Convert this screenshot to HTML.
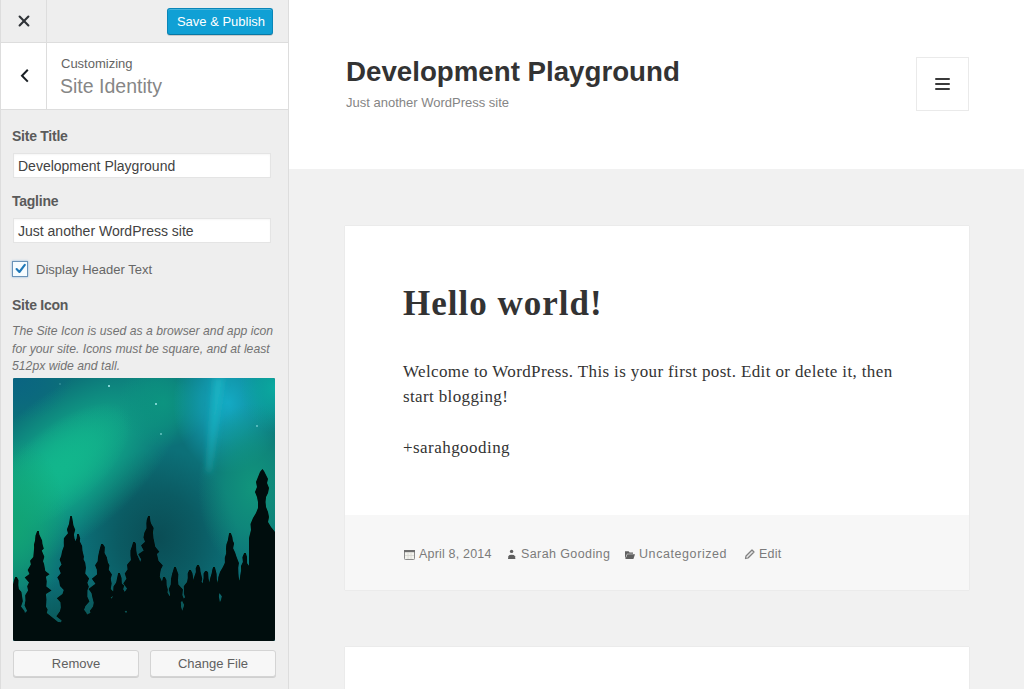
<!DOCTYPE html>
<html><head><meta charset="utf-8">
<style>
*{box-sizing:border-box;margin:0;padding:0}
html,body{width:1024px;height:689px;overflow:hidden;background:#f1f1f1;font-family:"Liberation Sans",sans-serif}
.abs{position:absolute}
#side{position:absolute;left:0;top:0;width:289px;height:689px;background:#eee;border-right:1px solid #ddd}
#lline{position:absolute;left:0;top:0;width:1px;height:689px;background:#ddd;z-index:5}
#topbar{position:absolute;left:0;top:0;width:288px;height:43px;border-bottom:1px solid #ddd;background:#eee}
#closecol{position:absolute;left:46px;top:0;width:1px;height:42px;background:#ddd}
#btn{position:absolute;left:167px;top:8px;width:106px;height:27px;background:#10a0d5;border:1px solid #0a86b8;border-bottom-color:#0878a5;border-radius:3px;color:#fff;font-size:13px;line-height:25px;padding-left:2px;text-align:center;box-shadow:inset 0 1px 0 rgba(120,200,230,.5),0 1px 0 rgba(0,0,0,.15)}
#sechead{position:absolute;left:0;top:43px;width:288px;height:67px;background:#fff;border-bottom:1px solid #ddd}
#backcol{position:absolute;left:46px;top:0;width:1px;height:66px;background:#ddd}
.lbl{position:absolute;left:12px;top:0;margin-top:1px;font-size:14px;letter-spacing:-0.25px;font-weight:bold;color:#5a5a5a}
.inp{position:absolute;left:13px;width:258px;height:25px;background:#fff;border:1px solid #e4e4e4;font-size:14px;color:#424242;padding-left:4px;line-height:25px;box-shadow:inset 0 1px 2px rgba(0,0,0,.04)}
#preview{position:absolute;left:289px;top:0;width:735px;height:689px;background:#f1f1f1}
#header{position:absolute;left:0;top:0;width:735px;height:169px;background:#fff}
.card{position:absolute;left:56px;width:624px;background:#fff;box-shadow:0 0 1px rgba(0,0,0,.15)}
.btn2{position:absolute;top:650px;height:27px;background:#f7f7f7;border:1px solid #d4d4d4;border-radius:3px;box-shadow:0 1px 0 #d0d0d0;color:#606060;font-size:13px;text-align:center;line-height:25px}
</style></head><body>
<div id="side"><div id="lline"></div>
  <div id="topbar">
    <div id="closecol"></div>
    <svg class="abs" style="left:18px;top:15px" width="12" height="12" viewBox="0 0 12 12"><path d="M1.6 1.6L10.4 10.4M10.4 1.6L1.6 10.4" stroke="#2f3337" stroke-width="2.1" stroke-linecap="round"/></svg>
    <div id="btn">Save &amp; Publish</div>
  </div>
  <div id="sechead">
    <div id="backcol"></div>
    <svg class="abs" style="left:20px;top:26px" width="10" height="14" viewBox="0 0 10 14"><path d="M7.8 0.8L2 6.7L7.8 12.6" stroke="#191e23" stroke-width="2" fill="none"/></svg>
    <div class="abs" style="left:61px;top:13px;font-size:13px;color:#646464">Customizing</div>
    <div class="abs" style="left:60px;top:32px;font-size:19.5px;color:#868686">Site Identity</div>
  </div>
  <div class="lbl" style="top:127px">Site Title</div>
  <div class="inp" style="top:153px">Development Playground</div>
  <div class="lbl" style="top:192px">Tagline</div>
  <div class="inp" style="top:218px">Just another WordPress site</div>
  <div class="abs" style="left:12px;top:261px;width:16px;height:16px;background:#f6fcff;border:1px solid #6a93b8;box-shadow:0 0 2px rgba(91,157,217,.7)"></div>
  <svg class="abs" style="left:13px;top:262px" width="14" height="14" viewBox="0 0 14 14"><path d="M3.6 7L6.4 10L11.8 2.8" stroke="#1f78b8" stroke-width="2.1" fill="none" stroke-linecap="round" stroke-linejoin="round"/></svg>
  <div class="abs" style="left:36px;top:262px;font-size:13px;color:#666">Display Header Text</div>
  <div class="lbl" style="top:296px">Site Icon</div>
  <div class="abs" style="left:12px;top:323px;width:290px;white-space:nowrap;font-size:12.2px;letter-spacing:0.02px;font-style:italic;color:#737373;line-height:17.5px">The Site Icon is used as a browser and app icon<br>for your site. Icons must be square, and at least<br>512px wide and tall.</div>
  <div id="img" class="abs" style="left:13px;top:378px;width:262px;height:263px;border-radius:2px;overflow:hidden;background:#0b5e6a">
<svg width="262" height="263" viewBox="0 0 262 263">
<defs><radialGradient id="gTL"><stop offset="0" stop-color="#0a6482" stop-opacity="1"/><stop offset="0.5" stop-color="#0a6482" stop-opacity="0.6"/><stop offset="1" stop-color="#0a6482" stop-opacity="0"/></radialGradient><radialGradient id="gG"><stop offset="0" stop-color="#12b68c" stop-opacity="1"/><stop offset="0.5" stop-color="#12b68c" stop-opacity="0.6"/><stop offset="1" stop-color="#12b68c" stop-opacity="0"/></radialGradient><radialGradient id="gG2"><stop offset="0" stop-color="#12a474" stop-opacity="1"/><stop offset="0.5" stop-color="#12a474" stop-opacity="0.6"/><stop offset="1" stop-color="#12a474" stop-opacity="0"/></radialGradient><radialGradient id="gD"><stop offset="0" stop-color="#0a4d55" stop-opacity="1"/><stop offset="0.5" stop-color="#0a4d55" stop-opacity="0.6"/><stop offset="1" stop-color="#0a4d55" stop-opacity="0"/></radialGradient><radialGradient id="gC"><stop offset="0" stop-color="#14aac4" stop-opacity="1"/><stop offset="0.5" stop-color="#14aac4" stop-opacity="0.6"/><stop offset="1" stop-color="#14aac4" stop-opacity="0"/></radialGradient><radialGradient id="gR"><stop offset="0" stop-color="#0aaaa0" stop-opacity="1"/><stop offset="0.5" stop-color="#0aaaa0" stop-opacity="0.6"/><stop offset="1" stop-color="#0aaaa0" stop-opacity="0"/></radialGradient><radialGradient id="gRM"><stop offset="0" stop-color="#11957c" stop-opacity="1"/><stop offset="0.5" stop-color="#11957c" stop-opacity="0.6"/><stop offset="1" stop-color="#11957c" stop-opacity="0"/></radialGradient><radialGradient id="gB"><stop offset="0" stop-color="#0a4a48" stop-opacity="1"/><stop offset="0.5" stop-color="#0a4a48" stop-opacity="0.6"/><stop offset="1" stop-color="#0a4a48" stop-opacity="0"/></radialGradient><radialGradient id="gT2"><stop offset="0" stop-color="#0c9480" stop-opacity="1"/><stop offset="0.5" stop-color="#0c9480" stop-opacity="0.6"/><stop offset="1" stop-color="#0c9480" stop-opacity="0"/></radialGradient>
<filter id="b3" filterUnits="userSpaceOnUse" x="-50" y="-50" width="362" height="363"><feGaussianBlur stdDeviation="3"/></filter>
<filter id="b4" filterUnits="userSpaceOnUse" x="-50" y="-50" width="362" height="363"><feGaussianBlur stdDeviation="0.5"/></filter>
</defs>
<rect width="262" height="263" fill="#0c7078"/>
<ellipse cx="0" cy="0" rx="60" ry="45" fill="url(#gTL)"/>
<ellipse cx="145" cy="160" rx="80" ry="90" fill="url(#gD)"/>
<ellipse cx="50" cy="90" rx="150" ry="70" fill="url(#gG)" transform="rotate(-40 50 90)"/>
<ellipse cx="45" cy="90" rx="90" ry="40" fill="url(#gG)" transform="rotate(-40 45 90)"/>
<ellipse cx="0" cy="150" rx="55" ry="90" fill="url(#gG2)"/>
<ellipse cx="150" cy="25" rx="45" ry="45" fill="url(#gT2)"/>
<ellipse cx="215" cy="25" rx="55" ry="70" fill="url(#gC)"/>
<ellipse cx="262" cy="10" rx="35" ry="45" fill="url(#gR)"/>
<ellipse cx="240" cy="110" rx="55" ry="85" fill="url(#gRM)"/>
<ellipse cx="131" cy="263" rx="200" ry="70" fill="url(#gB)"/>
<g filter="url(#b3)">
<path d="M201 0 L211 0 L197 95 L194 93 Z" fill="#22c0cc" opacity="0.6"/>
</g>
<g fill="#9ee8ea">
<circle cx="96" cy="8" r="1.1"/><circle cx="143" cy="26" r="1"/><circle cx="148" cy="56" r="0.9" opacity=".7"/><circle cx="244" cy="48" r="0.9" opacity=".7"/><circle cx="47" cy="6" r="0.7" opacity=".5"/>
</g>
<g filter="url(#b4)" fill="#030807"><path d="M3.8 199.0 L5.5 202.3 L5.3 207.0 L5.8 211.1 L8.4 214.0 L9.5 221.2 L9.8 223.3 L8.0 228.4 L11.6 233.3 L11.2 236.7 L13.5 243.5 L10.2 245.7 L13.6 251.7 L13.0 264.0 L-7.0 264.0 L-4.9 252.1 L-3.9 247.0 L-8.5 242.9 L-6.5 237.4 L-7.5 232.9 L-3.1 228.5 L-1.4 224.6 L-4.8 220.8 L-2.7 215.4 L-1.7 211.7 L-0.1 206.9 L1.0 202.4 L2.2 199.0ZM25.8 153.0 L26.3 156.5 L29.1 162.4 L29.4 165.7 L30.8 170.8 L28.7 172.5 L31.3 178.7 L30.0 183.2 L31.0 185.8 L32.3 193.1 L36.5 196.3 L32.9 198.8 L33.7 203.3 L33.3 208.6 L38.5 212.5 L32.9 216.1 L33.4 221.6 L33.0 228.8 L34.6 231.6 L33.3 236.9 L35.9 239.7 L32.1 243.4 L36.0 248.1 L31.7 253.4 L37.0 264.0 L13.0 264.0 L16.9 254.1 L12.3 248.8 L13.2 244.2 L12.5 240.3 L11.5 236.3 L14.1 232.7 L11.6 227.5 L12.5 222.5 L12.2 217.2 L15.1 212.5 L14.2 208.3 L16.0 204.6 L11.7 199.6 L16.5 195.9 L14.7 191.9 L17.9 186.5 L17.1 182.8 L20.3 178.9 L20.8 173.8 L21.1 170.1 L21.0 166.4 L22.0 162.7 L22.5 157.4 L24.2 153.0ZM58.8 138.0 L59.4 141.0 L60.4 147.2 L62.2 151.8 L60.9 156.5 L61.5 160.6 L63.4 166.1 L66.0 169.5 L67.4 174.5 L69.0 178.6 L69.8 182.0 L68.9 186.9 L72.8 191.4 L70.9 195.4 L65.8 200.3 L68.9 202.3 L69.9 209.3 L67.5 212.6 L72.2 216.4 L67.7 220.8 L71.4 225.5 L69.7 228.9 L71.7 234.3 L67.3 237.2 L66.8 242.3 L67.6 248.3 L65.7 251.4 L71.0 264.0 L45.0 264.0 L47.3 252.8 L47.0 247.3 L48.7 242.6 L43.4 238.2 L47.0 233.2 L47.9 229.5 L47.5 224.2 L43.9 220.3 L49.5 215.9 L50.8 212.0 L47.0 208.0 L46.2 203.1 L44.3 199.6 L47.8 195.2 L45.9 190.2 L48.6 186.6 L46.7 181.8 L48.3 177.5 L49.1 173.3 L50.9 168.3 L50.8 164.6 L50.9 160.2 L55.0 155.3 L53.9 151.5 L56.0 146.0 L56.7 141.4 L57.2 138.0ZM65.8 156.0 L67.2 160.5 L66.7 163.3 L69.1 168.0 L69.4 172.4 L70.9 178.7 L70.5 181.2 L72.2 184.7 L72.9 189.8 L72.2 195.4 L76.1 200.5 L74.3 204.8 L75.8 208.7 L74.4 212.3 L74.3 218.8 L76.4 223.5 L72.4 227.9 L71.0 231.7 L73.4 235.0 L75.3 240.6 L71.3 244.7 L75.5 250.8 L75.0 264.0 L55.0 264.0 L55.2 250.3 L54.8 245.7 L59.1 241.6 L54.9 236.5 L57.4 231.8 L54.8 226.6 L54.1 222.1 L54.6 218.1 L56.7 213.2 L56.1 207.8 L56.8 203.6 L59.0 199.8 L55.9 194.5 L58.8 189.8 L58.9 185.7 L60.6 182.2 L59.7 177.3 L62.3 172.6 L62.8 168.8 L61.9 164.4 L63.7 160.2 L64.2 156.0ZM89.8 166.0 L91.8 169.1 L91.5 175.0 L93.8 179.3 L94.9 184.4 L96.4 187.2 L95.7 191.8 L98.9 196.6 L97.7 200.8 L98.6 205.4 L97.7 211.0 L102.5 216.1 L97.6 219.7 L102.2 223.2 L101.5 228.0 L97.0 233.5 L98.1 235.6 L99.1 240.8 L97.7 246.0 L102.8 250.7 L102.0 264.0 L76.0 264.0 L77.7 250.4 L80.6 245.6 L78.4 241.1 L77.9 236.5 L77.0 232.8 L80.1 228.6 L80.8 224.7 L79.4 219.3 L78.5 214.9 L75.5 211.1 L82.5 205.7 L78.9 200.8 L84.0 196.5 L83.9 191.8 L82.1 187.2 L84.7 183.2 L85.0 179.1 L86.0 174.3 L86.9 170.4 L88.2 166.0ZM106.8 195.0 L108.5 200.1 L108.8 205.8 L111.2 207.4 L110.1 211.2 L113.3 216.5 L110.6 221.0 L116.2 225.6 L113.7 231.8 L111.5 233.8 L114.0 238.7 L115.5 245.1 L111.3 250.3 L112.7 253.3 L115.0 264.0 L97.0 264.0 L96.9 253.4 L100.5 249.0 L99.9 243.6 L98.3 239.8 L100.7 235.2 L97.0 231.3 L96.1 226.8 L98.1 221.9 L100.3 217.6 L100.3 212.4 L100.5 208.5 L103.2 204.5 L104.3 199.2 L105.2 195.0ZM121.8 164.0 L123.0 166.1 L123.2 172.3 L123.9 176.4 L126.8 182.8 L127.0 186.6 L129.5 192.5 L129.3 196.4 L131.3 201.8 L131.7 205.3 L129.8 210.4 L132.2 214.4 L132.4 217.5 L131.4 222.5 L132.6 229.1 L132.0 234.5 L128.0 236.9 L129.4 243.3 L134.6 246.9 L133.4 250.9 L133.0 264.0 L109.0 264.0 L109.8 252.1 L110.7 246.7 L113.7 242.1 L111.5 237.8 L114.2 233.8 L109.8 228.3 L110.3 222.8 L107.6 218.0 L111.8 214.0 L114.1 210.5 L110.3 205.6 L113.5 200.7 L111.8 195.6 L114.6 191.5 L114.1 186.8 L118.0 181.9 L117.5 177.4 L117.5 172.4 L119.2 167.5 L120.2 164.0ZM136.8 138.0 L137.3 143.0 L138.0 145.5 L140.6 150.0 L139.9 154.1 L140.4 160.3 L140.9 162.3 L142.2 168.7 L146.3 173.8 L143.9 176.1 L145.5 182.9 L149.8 187.5 L148.0 191.1 L147.3 194.0 L146.7 198.8 L149.2 204.3 L148.9 208.9 L149.3 213.8 L148.5 217.8 L149.0 221.4 L150.3 227.5 L145.3 229.7 L147.4 233.4 L147.4 238.7 L144.8 242.1 L143.7 246.4 L149.1 251.8 L149.0 264.0 L123.0 264.0 L124.0 252.7 L122.3 247.6 L125.1 242.6 L123.6 238.3 L128.1 234.7 L128.4 229.9 L121.2 226.3 L123.9 222.3 L126.7 217.6 L121.9 213.4 L121.4 209.7 L125.6 204.2 L123.6 199.5 L128.4 195.2 L128.0 191.2 L125.9 186.5 L128.3 181.6 L125.3 176.2 L130.8 172.5 L128.1 167.5 L132.1 163.7 L130.5 159.6 L131.4 154.8 L133.6 150.2 L133.4 145.5 L133.8 141.7 L135.2 138.0ZM151.8 199.0 L153.4 202.0 L153.6 207.3 L154.8 211.8 L154.4 214.6 L157.6 219.9 L156.4 226.0 L158.9 229.8 L157.1 233.9 L158.8 237.7 L159.8 242.6 L156.9 247.6 L156.6 252.9 L159.0 264.0 L143.0 264.0 L142.3 253.3 L145.1 247.9 L142.1 242.8 L146.0 237.5 L145.9 233.3 L145.1 229.2 L146.2 225.5 L145.3 220.5 L144.9 215.8 L145.8 212.1 L147.0 207.2 L149.4 202.3 L150.2 199.0ZM162.8 189.0 L163.8 191.9 L165.3 196.2 L165.0 202.1 L165.3 206.6 L169.9 211.6 L169.3 217.1 L170.9 221.1 L167.7 224.3 L168.1 229.2 L169.1 232.4 L169.6 238.5 L171.9 243.0 L171.6 249.4 L172.1 254.1 L171.0 264.0 L153.0 264.0 L152.3 253.6 L153.4 248.5 L153.2 243.3 L153.4 238.4 L152.9 232.9 L155.7 228.4 L153.6 223.6 L156.6 219.9 L157.1 216.3 L155.8 211.1 L157.8 206.6 L158.0 201.3 L159.1 196.1 L160.3 192.2 L161.2 189.0ZM177.8 192.0 L179.4 195.3 L180.4 201.4 L180.0 203.9 L180.2 207.6 L183.5 211.0 L183.6 216.8 L182.3 218.3 L184.3 222.3 L182.2 227.8 L185.3 231.1 L185.8 234.7 L183.7 238.9 L185.2 243.0 L182.7 249.4 L181.5 252.6 L185.0 264.0 L169.0 264.0 L171.5 252.7 L170.1 247.9 L168.1 243.3 L168.0 239.7 L168.3 235.1 L170.0 231.1 L171.3 227.0 L169.2 223.1 L172.1 219.2 L170.9 215.6 L171.0 212.0 L170.8 208.2 L174.1 204.1 L174.8 199.9 L174.7 195.5 L176.2 192.0ZM185.8 187.0 L187.2 190.6 L187.4 193.3 L189.2 200.8 L188.5 204.1 L191.8 207.8 L192.2 209.3 L194.0 215.2 L193.2 219.9 L193.4 224.6 L190.2 231.1 L189.8 233.6 L191.1 239.2 L191.6 243.8 L189.5 247.2 L192.1 252.3 L193.0 264.0 L177.0 264.0 L179.5 252.4 L177.5 247.5 L178.7 242.4 L177.2 238.6 L179.1 234.2 L178.1 230.1 L180.2 225.5 L179.1 220.2 L178.4 215.0 L179.8 210.5 L178.3 206.8 L180.2 203.3 L181.1 199.3 L182.9 194.1 L182.7 190.2 L184.2 187.0ZM193.8 193.0 L195.1 194.6 L195.5 200.4 L196.4 204.8 L198.2 207.9 L199.5 213.2 L198.0 217.7 L198.3 223.5 L197.8 228.1 L199.4 231.5 L199.9 238.5 L199.3 242.6 L199.3 248.0 L200.6 253.2 L201.0 264.0 L185.0 264.0 L184.8 252.9 L188.5 247.4 L184.7 243.1 L186.6 238.1 L188.0 232.7 L185.8 228.9 L185.2 223.8 L188.2 218.9 L187.1 213.8 L189.5 208.4 L189.8 204.3 L190.6 200.3 L190.6 195.5 L192.2 193.0ZM201.8 189.0 L202.6 192.0 L203.6 196.1 L203.8 201.2 L205.3 205.7 L208.5 209.5 L206.2 215.8 L205.8 218.4 L207.0 225.1 L206.0 229.5 L208.0 232.0 L209.8 237.9 L206.0 242.6 L206.6 245.9 L208.0 249.5 L209.0 264.0 L193.0 264.0 L195.7 250.8 L192.3 245.7 L193.7 241.6 L195.3 236.4 L192.3 231.8 L194.4 228.0 L193.3 223.8 L195.7 219.2 L192.8 214.4 L194.6 209.5 L196.1 205.7 L197.1 200.4 L198.7 195.2 L199.4 191.5 L200.2 189.0ZM217.8 155.0 L219.3 158.9 L219.9 163.1 L221.1 165.2 L220.1 170.2 L222.1 174.5 L223.4 178.4 L225.9 185.0 L225.2 189.7 L225.4 195.6 L225.7 199.1 L226.5 204.0 L225.2 207.0 L227.9 213.5 L227.0 217.0 L226.4 221.7 L226.5 224.8 L224.6 228.4 L227.4 236.1 L224.5 240.1 L223.7 244.9 L229.3 246.3 L225.2 250.4 L228.0 264.0 L206.0 264.0 L209.0 251.7 L207.4 247.8 L205.0 244.0 L205.6 239.4 L204.6 235.0 L208.3 229.7 L206.4 225.6 L208.0 222.0 L208.9 218.2 L205.0 213.2 L205.0 208.3 L205.0 203.9 L205.3 199.3 L207.0 194.1 L209.9 189.1 L211.9 184.7 L211.8 179.8 L213.2 175.2 L213.0 170.5 L213.4 166.6 L214.8 162.4 L215.7 157.6 L216.2 155.0ZM232.8 175.0 L234.0 178.9 L234.1 185.2 L237.2 189.5 L236.2 193.8 L239.5 197.4 L240.9 203.7 L238.1 207.3 L241.9 209.2 L241.8 214.0 L240.2 218.7 L241.8 223.0 L241.5 228.6 L242.8 232.3 L243.1 236.5 L238.0 241.5 L240.7 243.0 L239.0 250.0 L242.0 252.0 L242.0 264.0 L222.0 264.0 L224.8 252.8 L224.8 249.1 L223.3 244.4 L222.7 240.0 L224.7 236.0 L222.5 232.0 L225.1 227.8 L224.7 223.9 L220.9 220.0 L221.3 215.1 L225.9 209.8 L223.4 206.2 L226.6 202.3 L227.2 197.8 L228.1 192.5 L228.0 188.1 L229.9 184.0 L229.4 179.3 L231.2 175.0ZM259.8 159.0 L260.5 163.2 L262.0 168.3 L263.0 170.8 L263.4 176.9 L265.0 182.5 L268.3 185.4 L267.7 190.6 L269.9 196.7 L266.9 200.0 L269.9 204.9 L266.9 207.9 L268.7 212.3 L266.1 217.7 L271.3 220.3 L265.9 224.3 L267.5 229.9 L266.8 232.6 L271.6 238.0 L268.2 239.9 L269.1 247.0 L268.9 252.4 L271.0 264.0 L247.0 264.0 L251.4 251.7 L252.1 246.2 L249.4 240.8 L247.4 237.1 L246.5 233.3 L248.6 229.6 L250.2 224.9 L248.5 221.1 L246.7 216.5 L248.8 212.4 L246.1 208.9 L252.1 204.3 L249.2 199.8 L248.2 195.8 L252.8 191.4 L251.9 186.3 L252.9 181.5 L253.6 176.4 L253.8 171.8 L257.0 167.5 L257.1 162.1 L258.2 159.0ZM249.4 91.0 L251.0 93.0 L253.0 97.0 L255.0 101.0 L254.0 105.0 L256.0 110.0 L255.0 115.0 L253.0 119.0 L252.5 124.0 L253.0 129.0 L255.0 134.0 L256.0 139.0 L255.0 144.0 L258.0 149.0 L262.0 154.0 L262.0 264.0 L236.0 264.0 L236.0 160.0 L238.0 152.0 L237.5 146.0 L240.0 140.0 L243.0 135.0 L245.0 130.0 L245.0 124.0 L244.0 119.0 L242.0 114.0 L244.0 109.0 L243.0 104.0 L245.0 99.0 L247.0 94.0ZM0.0 236.0 L30.0 232.0 L45.0 244.0 L62.0 246.0 L75.0 236.0 L90.0 230.0 L120.0 236.0 L150.0 228.0 L168.0 234.0 L190.0 226.0 L230.0 222.0 L262.0 220.0 L262.0 264.0 L0.0 264.0Z"/></g>
</svg></div>
  <div class="btn2" style="left:13px;width:126px">Remove</div>
  <div class="btn2" style="left:150px;width:126px">Change File</div>
</div>
<div id="preview">
  <div id="header">
    <div class="abs" style="left:57px;top:56px;font-size:27.7px;font-weight:bold;color:#333">Development Playground</div>
    <div class="abs" style="left:57px;top:95px;font-size:13px;color:#858585">Just another WordPress site</div>
    <div class="abs" style="left:627px;top:57px;width:53px;height:54px;border:1px solid #eaeaea"></div>
    <div class="abs" style="left:646px;top:78px;width:15px;height:2px;background:#3a3a3a;border-radius:1px"></div>
    <div class="abs" style="left:646px;top:83px;width:15px;height:2px;background:#3a3a3a;border-radius:1px"></div>
    <div class="abs" style="left:646px;top:88px;width:15px;height:2px;background:#3a3a3a;border-radius:1px"></div>
  </div>
  <div class="card" style="top:226px;height:364px">
    <div class="abs" style="left:58px;top:58px;font-family:'Liberation Serif',serif;font-size:35px;letter-spacing:1px;font-weight:bold;color:#333">Hello world!</div>
    <div class="abs" style="left:58px;top:133px;width:520px;font-family:'Liberation Serif',serif;font-size:17px;letter-spacing:0.37px;line-height:25px;color:#333">Welcome to WordPress. This is your first post. Edit or delete it, then<br>start blogging!</div>
    <div class="abs" style="left:58px;top:209px;font-family:'Liberation Serif',serif;font-size:17px;letter-spacing:0.45px;line-height:25px;color:#333">+sarahgooding</div>
    <div class="abs" style="left:0;top:289px;width:624px;height:75px;background:#f7f7f7"></div>
  </div>
  <div class="card" style="top:647px;height:60px"></div>
</div>
<div id="meta" style="position:absolute;left:0;top:0;width:1024px;height:689px;white-space:nowrap;font-size:12.5px;color:#7b7b7b">
<svg class="abs" style="left:404px;top:550px" width="11" height="10" viewBox="0 0 11 10"><rect x="0.5" y="0.5" width="10" height="9" rx="0.8" fill="#f3f3ee" stroke="#8a8a8a" stroke-width="1"/><rect x="0" y="0" width="11" height="2.2" fill="#6e6e6e"/><g stroke="#d6d6d0" stroke-width="0.8"><path d="M4 2.5V9M7 2.5V9M1 5.5H10"/></g></svg>
<div class="abs" style="left:419px;top:547px;letter-spacing:0.19px">April 8, 2014</div>
<svg class="abs" style="left:508px;top:549px" width="8" height="10" viewBox="0 0 8 10"><circle cx="3.6" cy="2.4" r="1.7" fill="#5f5f5f"/><path d="M0 10 L0.4 7.2 Q1 5.8 3.7 5.8 Q6.4 5.8 7 7.2 L7.4 10Z" fill="#5f5f5f"/></svg>
<div class="abs" style="left:521px;top:547px;letter-spacing:0.4px">Sarah Gooding</div>
<svg class="abs" style="left:625px;top:551px" width="10" height="8" viewBox="0 0 10 8"><path d="M0 0.3 L3.6 0.3 L4.6 1.5 L8 1.5 L8 2.8 L2 2.8 L0 8 Z" fill="#606060"/><path d="M2.4 3.3 L10 3.3 L8.4 8 L0.4 8 Z" fill="#606060"/></svg>
<div class="abs" style="left:639px;top:547px;letter-spacing:0.58px">Uncategorized</div>
<svg class="abs" style="left:744px;top:549px" width="11" height="11" viewBox="0 0 11 11"><path d="M1.5 9.5 L2 7 L8 1 L10 3 L4 9 Z" fill="#e8e8e8" stroke="#808080" stroke-width="1.25" stroke-linejoin="round"/></svg>
<div class="abs" style="left:759px;top:547px;letter-spacing:0.2px">Edit</div>
</div>
</body></html>
